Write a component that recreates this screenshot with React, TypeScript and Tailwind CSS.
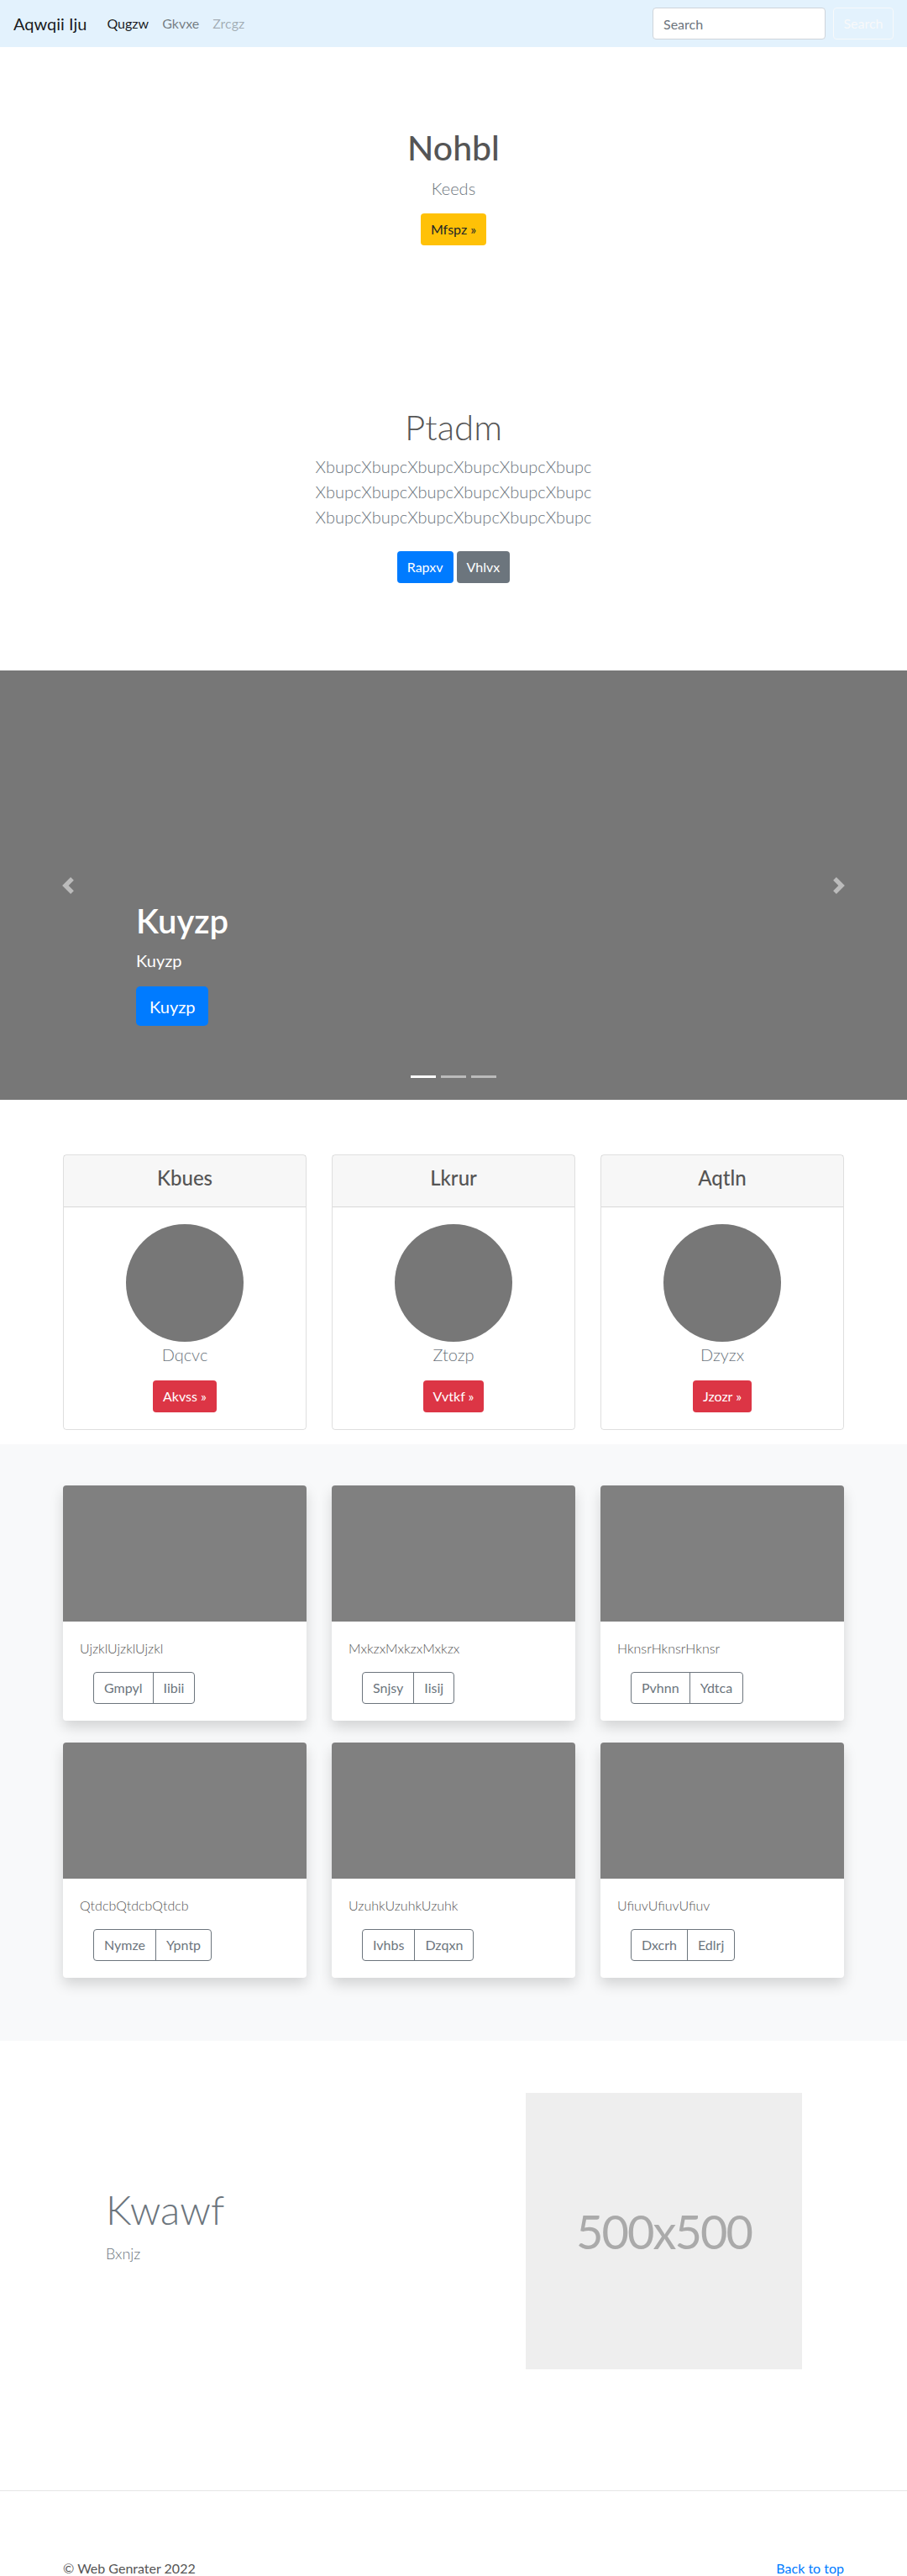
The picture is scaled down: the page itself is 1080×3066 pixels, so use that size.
import React from 'react';

const albumCards = [
  { text: 'UjzklUjzklUjzkl', a: 'Gmpyl', b: 'Iibii' },
  { text: 'MxkzxMxkzxMxkzx', a: 'Snjsy', b: 'Iisij' },
  { text: 'HknsrHknsrHknsr', a: 'Pvhnn', b: 'Ydtca' },
  { text: 'QtdcbQtdcbQtdcb', a: 'Nymze', b: 'Ypntp' },
  { text: 'UzuhkUzuhkUzuhk', a: 'Ivhbs', b: 'Dzqxn' },
  { text: 'UfiuvUfiuvUfiuv', a: 'Dxcrh', b: 'Edlrj' },
];

const pricing = [
  { title: 'Kbues', name: 'Dqcvc', btn: 'Akvss »' },
  { title: 'Lkrur', name: 'Ztozp', btn: 'Vvtkf »' },
  { title: 'Aqtln', name: 'Dzyzx', btn: 'Jzozr »' },
];

const App = () => {
  return (
    <div className="font-['Lato','Noto_Sans',sans-serif] text-[#212529]">
      {/* navbar */}
      <nav className="flex h-[56px] items-center bg-[#e3f2fd] px-4">
        <span className="mr-4 text-[20px] text-black/90">Aqwqii Iju</span>
        <ul className="flex text-[16px]">
          <li className="px-2 text-black/90">Qugzw</li>
          <li className="px-2 text-black/50">Gkvxe</li>
          <li className="px-2 text-black/30">Zrcgz</li>
        </ul>
        <div className="ml-auto flex items-center">
          <input
            placeholder="Search"
            className="mr-[9px] h-[38px] w-[206px] rounded-[4px] border border-[#ced4da] bg-white px-3 text-[16px] placeholder:text-[#6c757d]"
          />
          <button className="h-[38px] w-[72px] rounded-[4px] border border-[#f8f9fa] text-[16px] text-[#f8f9fa]">
            Search
          </button>
        </div>
      </nav>

      {/* jumbotron */}
      <section className="flex flex-col items-center pt-[96px] text-center">
        <h1 className="mb-[9px] text-[41px] leading-[48px] font-medium text-[#555]">Nohbl</h1>
        <p className="mb-[15px] text-[20px] leading-[30px] font-light text-[#6c757d]">Keeds</p>
        <button className="h-[38px] rounded-[4px] bg-[#ffc107] px-3 text-[16px] text-[#212529]">
          Mfspz »
        </button>
      </section>

      <section className="flex flex-col items-center pt-[191px] text-center">
        <h1 className="mb-[7px] text-[42px] leading-[50px] font-light text-[#555]">Ptadm</h1>
        <div className="text-[20px] leading-[30px] font-light text-[#6c757d]">
          <p>XbupcXbupcXbupcXbupcXbupcXbupc</p>
          <p>XbupcXbupcXbupcXbupcXbupcXbupc</p>
          <p>XbupcXbupcXbupcXbupcXbupcXbupc</p>
        </div>
        <div className="mt-[26px] flex gap-1">
          <button className="h-[38px] rounded-[4px] bg-[#007bff] px-3 text-[16px] text-white">Rapxv</button>
          <button className="h-[38px] rounded-[4px] bg-[#6c757d] px-3 text-[16px] text-white">Vhlvx</button>
        </div>
      </section>

      {/* carousel */}
      <section className="relative mt-[104px] h-[511px] bg-[#777]">
        <div className="absolute top-0 left-0 flex h-full w-[162px] items-center justify-center">
          <svg viewBox="0 0 8 8" className="h-5 w-5 fill-white opacity-50">
            <path d="M5.25 0l-4 4 4 4 1.5-1.5L4.25 4l2.5-2.5L5.25 0z" />
          </svg>
        </div>
        <div className="absolute top-0 right-0 flex h-full w-[162px] items-center justify-center">
          <svg viewBox="0 0 8 8" className="h-5 w-5 fill-white opacity-50">
            <path d="M2.75 0l-1.5 1.5L3.75 4l-2.5 2.5L2.75 8l4-4-4-4z" />
          </svg>
        </div>
        <div className="absolute bottom-[88px] left-[162px] text-white">
          <h1 className="mb-2 text-[40px] leading-[48px] font-semibold">Kuyzp</h1>
          <p className="mb-4 text-[20px] leading-[30px]">Kuyzp</p>
          <button className="h-[47px] rounded-[5px] bg-[#007bff] px-4 text-[20px] text-white">Kuyzp</button>
        </div>
        <div className="absolute bottom-[26px] left-0 flex w-full justify-center gap-[6px]">
          <span className="h-[3px] w-[30px] bg-white" />
          <span className="h-[3px] w-[30px] bg-white/50" />
          <span className="h-[3px] w-[30px] bg-white/50" />
        </div>
      </section>

      {/* pricing cards */}
      <section className="pt-[65px] pb-[17px]">
        <div className="mx-auto grid w-[930px] grid-cols-3 gap-x-[30px]">
          {pricing.map((p) => (
            <div key={p.title} className="rounded-[4px] border border-black/[0.125] text-center">
              <div className="border-b border-black/[0.125] bg-black/[0.03] px-5 pt-3 pb-3">
                <h4 className="mb-2 text-[24px] leading-[29px] font-medium text-[#555]">{p.title}</h4>
              </div>
              <div className="flex flex-col items-center p-5">
                <div className="h-[140px] w-[140px] rounded-full bg-[#777]" />
                <p className="mb-4 text-[20px] leading-[30px] font-light text-[#6c757d]">{p.name}</p>
                <button className="h-[38px] rounded-[4px] bg-[#dc3545] px-3 text-[16px] text-white">{p.btn}</button>
              </div>
            </div>
          ))}
        </div>
      </section>

      {/* album */}
      <section className="bg-[#f8f9fa] pt-[49px] pb-[75px]">
        <div className="mx-auto grid w-[930px] grid-cols-3 gap-x-[30px] gap-y-[26px]">
          {albumCards.map((c) => (
            <div key={c.text} className="overflow-hidden rounded-[4px] bg-white shadow-[0_8px_16px_rgba(0,0,0,0.15)]">
              <div className="h-[162px] bg-[#808080]" />
              <div className="p-5">
                <p className="mb-4 text-[16px] leading-[24px] font-light text-[#555]">{c.text}</p>
                <div className="ml-4 inline-flex h-[38px] rounded-[4px] border border-[#6c757d] text-[16px] text-[#6c757d]">
                  <span className="flex items-center border-r border-[#6c757d] px-3">{c.a}</span>
                  <span className="flex items-center px-3">{c.b}</span>
                </div>
              </div>
            </div>
          ))}
        </div>
      </section>

      {/* featurette */}
      <section className="pt-[62px] pb-[144px]">
        <div className="mx-auto flex w-[930px] items-center">
          <div className="mb-[15px] w-[551px] pl-[51px]">
            <h2 className="mb-[10px] text-[48px] leading-[58px] font-light text-[#6c757d]">Kwawf</h2>
            <p className="text-[18px] leading-[27px] font-light text-[#6c757d]">Bxnjz</p>
          </div>
          <div className="flex h-[329px] w-[329px] items-center justify-center bg-[#eee]">
            <span className="text-[56px] tracking-[-2px] text-[#aaa]">500x500</span>
          </div>
        </div>
      </section>

      {/* footer */}
      <footer className="border-t border-[#e5e5e5] pt-[80px]">
        <div className="mx-auto flex w-[930px] justify-between text-[16px] leading-[24px]">
          <p className="text-[#555]">© Web Genrater 2022</p>
          <a className="text-[#007bff]">Back to top</a>
        </div>
      </footer>
    </div>
  );
};

export default App;
